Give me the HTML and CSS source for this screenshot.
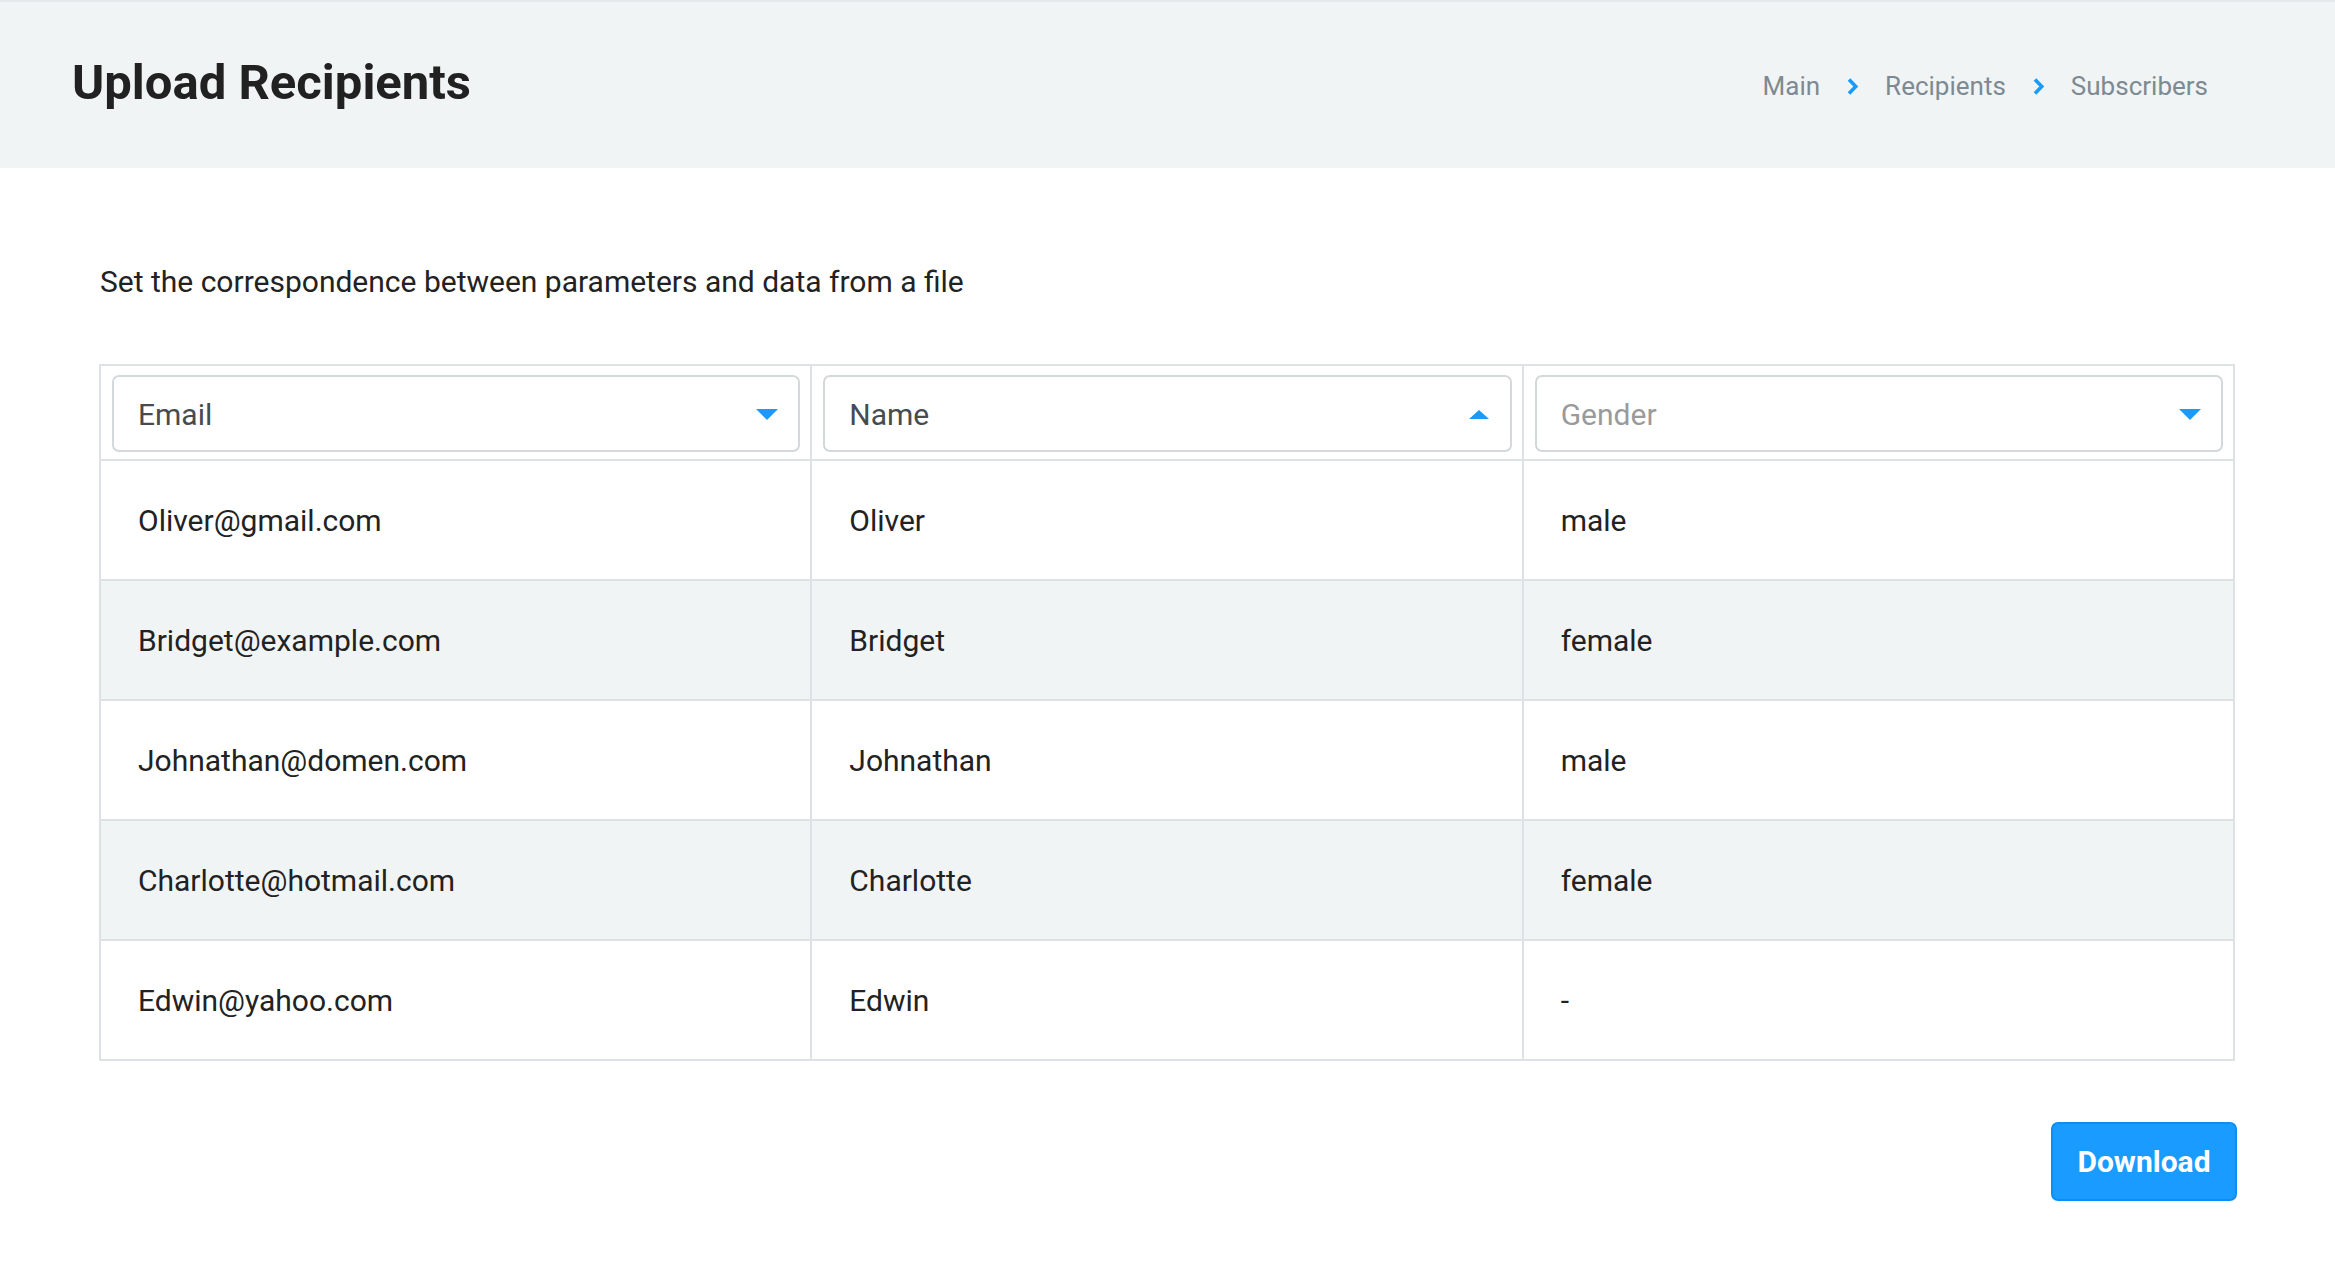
FILE: index.html
```html
<!DOCTYPE html>
<html lang="en">
<head>
<meta charset="utf-8">
<title>Upload Recipients</title>
<link rel="stylesheet" href="styles.css">
</head>
<body>
<header class="page-header">
  <h1 class="title">Upload Recipients</h1>
  <nav class="crumbs">
    <span class="crumb">Main</span>
    <svg class="chev" width="11" height="17" viewBox="0 0 11 17"><polyline points="2,1.5 8.8,8.5 2,15.5" fill="none" stroke="#1a9bfc" stroke-width="3.6" stroke-linejoin="miter"/></svg>
    <span class="crumb">Recipients</span>
    <svg class="chev" width="11" height="17" viewBox="0 0 11 17"><polyline points="2,1.5 8.8,8.5 2,15.5" fill="none" stroke="#1a9bfc" stroke-width="3.6" stroke-linejoin="miter"/></svg>
    <span class="crumb">Subscribers</span>
  </nav>
</header>
<main class="content">
  <p class="intro">Set the correspondence between parameters and data from a file</p>
  <div class="grid">
    <div class="hcell"><div class="select"><span class="sel-text">Email</span><svg class="arrow" width="22" height="11" viewBox="0 0 22 11"><polygon points="0,0 22,0 11,11" fill="#1a9bfc"/></svg></div></div>
    <div class="hcell"><div class="select"><span class="sel-text">Name</span><svg class="arrow up" width="20" height="9" viewBox="0 0 20 9"><polygon points="0,9 20,9 10,0" fill="#1a9bfc"/></svg></div></div>
    <div class="hcell"><div class="select"><span class="sel-text placeholder">Gender</span><svg class="arrow" width="22" height="11" viewBox="0 0 22 11"><polygon points="0,0 22,0 11,11" fill="#1a9bfc"/></svg></div></div>

    <div class="cell">Oliver@gmail.com</div><div class="cell">Oliver</div><div class="cell">male</div>
    <div class="cell alt">Bridget@example.com</div><div class="cell alt">Bridget</div><div class="cell alt">female</div>
    <div class="cell">Johnathan@domen.com</div><div class="cell">Johnathan</div><div class="cell">male</div>
    <div class="cell alt">Charlotte@hotmail.com</div><div class="cell alt">Charlotte</div><div class="cell alt">female</div>
    <div class="cell">Edwin@yahoo.com</div><div class="cell">Edwin</div><div class="cell">-</div>
  </div>
  <div class="actions">
    <button class="btn">Download</button>
  </div>
</main>
</body>
</html>
```
FILE: styles.css
```css
* { box-sizing: border-box; }
html, body { margin: 0; padding: 0; }
body {
  font-family: Roboto, "Liberation Sans", Arial, sans-serif;
  background: #ffffff;
  color: #222222;
}
.page-header {
  height: 168px;
  border-top: 2px solid #e6e9eb;
  background: #f1f4f5;
  display: flex;
  justify-content: space-between;
  align-items: flex-start;
  padding: 52px 127px 0 72px;
}
.title {
  margin: 0;
  font-size: 49px;
  line-height: 58px;
  font-weight: 700;
  color: #212121;
}
.crumbs {
  margin-top: 17px;
  display: flex;
  align-items: center;
  gap: 27px;
  font-size: 26px;
  line-height: 30px;
  color: #7d8a91;
}
.chev { display: block; }
.content {
  padding: 96px 100px 0 99px;
}
.intro {
  margin: 0 0 65px 1px;
  font-size: 30px;
  line-height: 35px;
  color: #222222;
}
.grid {
  display: grid;
  grid-template-columns: 1fr 1fr 1fr;
  grid-template-rows: 93px repeat(5, 118px);
  gap: 2px;
  padding: 2px;
  background: #dfe2e4;
}
.hcell {
  background: #ffffff;
  padding: 9px 10px 7px 11px;
}
.select {
  height: 77px;
  border: 2px solid #d3d8db;
  border-radius: 7px;
  background: #ffffff;
  display: flex;
  align-items: center;
  justify-content: space-between;
  padding: 2px 20px 0 24px;
}
.sel-text {
  font-size: 30px;
  color: #464b50;
}
.sel-text.placeholder { color: #9a9a9a; }
.arrow { display: block; }
.arrow.up { margin-right: 1px; }
.cell {
  background: #ffffff;
  display: flex;
  align-items: center;
  padding: 0 0 0 37px;
  font-size: 30px;
  color: #222222;
}
.cell.alt { background: #f1f4f5; }
.actions {
  display: flex;
  justify-content: flex-end;
  margin-top: 61px;
  margin-right: -2px;
}
.btn {
  width: 186px;
  height: 79px;
  border: 2px solid #0d8ef5;
  border-radius: 7px;
  background: #1a9bff;
  color: #ffffff;
  font-family: Roboto, "Liberation Sans", Arial, sans-serif;
  font-size: 30px;
  font-weight: 700;
  padding: 0;
}
```
